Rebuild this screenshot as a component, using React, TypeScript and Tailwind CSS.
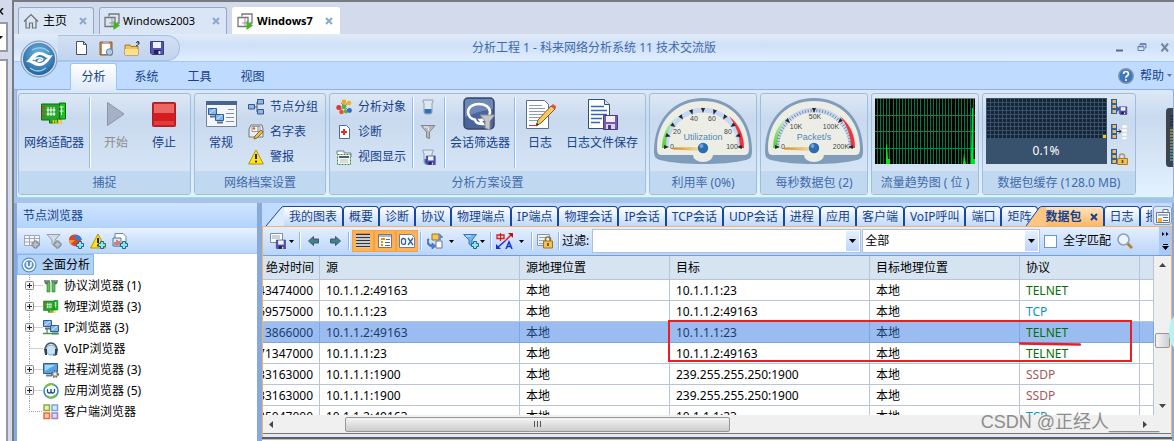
import React from 'react';

type Kids = { children?: React.ReactNode };

function Svg({ w = 16, h = 16, box, children, className = '' }: Kids & { w?: number; h?: number; box?: string; className?: string }) {
  return (
    <svg width={w} height={h} viewBox={box ?? `0 0 ${w} ${h}`} fill="none" aria-hidden="true" className={`shrink-0 ${className}`}>
      {children}
    </svg>
  );
}

/* ---------- shared glyphs ---------- */

const Floppy = ({ x = 0, y = 0, s = 1 }: { x?: number; y?: number; s?: number }) => (
  <g transform={`translate(${x} ${y}) scale(${s})`}>
    <path d="M.5 1.5h13v13H2L.5 13z" fill="#5252b4" stroke="#3b3b86" />
    <path d="M3 2h8v6H3z" fill="#eef3fc" />
    <path d="M4 10h7v4H4z" fill="#23234e" />
    <path d="M8.5 11h2v3h-2z" fill="#dfe5f5" />
  </g>
);

const Plus = ({ x, y }: { x: number; y: number }) => (
  <path
    transform={`translate(${x} ${y})`}
    d="M2.5.5h3v2h2v3h-2v2h-3v-2h-2v-3h2z"
    fill="#8fe3ea"
    stroke="#1b6a86"
  />
);

const CloseX = ({ color }: { color: string }) => (
  <Svg w={8} h={8}>
    <path d="M1 1l6 6M7 1L1 7" stroke={color} strokeWidth="2" />
  </Svg>
);

const Caret = ({ className = '' }: { className?: string }) => (
  <Svg w={5} h={3} className={className}>
    <path d="M0 0h5L2.5 3z" fill="#000" />
  </Svg>
);

const WarnShape = () => (
  <g>
    <path d="M8 1L15.4 15H.6z" fill="#ffe21a" stroke="#b89500" strokeLinejoin="round" />
    <path d="M8 5v5" stroke="#222" strokeWidth="2" />
    <circle cx="8" cy="12.5" r="1.1" fill="#222" />
  </g>
);

const CardShape = () => (
  <g>
    <path d="M1 2h20v15h-4v4H9v-3H1z" fill="#25a62a" stroke="#0d6b14" />
    <path d="M19 1h6v16h-6z" fill="#19c21f" stroke="#0d6b14" />
    <path d="M3 4v3M3 9v2M3 13v2" stroke="#e8301a" strokeWidth="2" />
    <path d="M7.5 5v9M10.500 5v9M13.500 5v9M6 8h9M6 12h9" stroke="#fff" />
    <path d="M19 5h4M19 9h4M21 4v9" stroke="#fff" />
    <path d="M13 18v4M15.500 18v4M18 18v4M20.500 18v4" stroke="#e6c81b" strokeWidth="1.500" />
  </g>
);

const Pc = ({ x, y }: { x: number; y: number }) => (
  <g transform={`translate(${x} ${y})`}>
    <path d="M.5.5h8v6h-8z" fill="#7fb6ec" stroke="#355b93" />
    <path d="M2 5l5-4" stroke="#d7ecff" />
    <path d="M2 8.500h6" stroke="#5c6f8a" strokeWidth="2" />
  </g>
);

const Cells = () => (
  <g>
    {[0, 5, 10].map((y) => (
      <g key={y}>
        <path d={`M0 ${y}h6v5H0z`} fill="#2f5fa8" />
        <path d={`M1.500 ${y + 1}h3.500v3h-3.500z`} fill="#f1bb55" />
      </g>
    ))}
  </g>
);

/* ---------- virtual machine tabs ---------- */

const VmIcon = () => (
  <Svg w={17} h={17}>
    <path d="M5 3.500V1h10v9h-2" stroke="#777" strokeWidth="1.300" />
    <path d="M1 4.500h10v9H1z" stroke="#777" strokeWidth="1.300" />
    <path d="M5 10h5M8 5v8" stroke="#999" />
    <path d="M9.500 7.500l6.500 5-6.500 4.500z" fill="#43b428" />
  </Svg>
);

function VmTab({ icon, label, active = false, width, text }: { icon: React.ReactNode; label: string; active?: boolean; width: string; text: string }) {
  return (
    <div
      className={`flex h-[27px] items-center rounded-t-[3px] border border-b-0 pr-[6px] pl-[4px] ${width} ${
        active ? 'border-white bg-white font-bold' : 'border-[#8fa9cf] bg-[#dae6f5]'
      }`}
    >
      {icon}
      <button className={`text-left leading-[16px] whitespace-nowrap text-black ${text}`}>{label}</button>
      <button aria-label={`关闭 ${label}`} className="ml-auto">
        <CloseX color="#86abcb" />
      </button>
    </div>
  );
}

/* ---------- ribbon ---------- */

function Group({ title, children, width, align = 'justify-center' }: Kids & { title: string; width: string; align?: string }) {
  return (
    <section className={`flex h-[102px] shrink-0 flex-col rounded-[3px] border border-[#9ebfdb] bg-linear-to-b from-[#dde8f5] via-[#c9d9ee] via-25% to-[#dbe9f8] ${width}`}>
      <div className={`flex h-[77px] ${align}`}>{children}</div>
      <h2 className="flex h-[23px] items-center justify-center bg-[#c1d8f1] text-[12px] leading-[16px] whitespace-nowrap text-[#3e6aaa]">{title}</h2>
    </section>
  );
}

function Big({ icon, label, width, disabled = false }: { icon: React.ReactNode; label: string; width: string; disabled?: boolean }) {
  return (
    <button disabled={disabled} className={`flex flex-col items-center pt-[3px] ${width}`}>
      <span className="flex h-[34px] items-center justify-center">{icon}</span>
      <span className={`mt-[4px] text-[12px] leading-[16px] whitespace-nowrap ${disabled ? 'text-[#8d8d8d]' : 'text-[#15428b]'}`}>{label}</span>
    </button>
  );
}

function Small({ icon, label }: { icon: React.ReactNode; label: string }) {
  return (
    <button className="flex h-[25px] items-center gap-[6px] text-[12px] leading-[16px] whitespace-nowrap text-[#15428b]">
      {icon}
      {label}
    </button>
  );
}

const Divider = () => <span className="mt-[3px] h-[71px] w-[2px] shrink-0 border-r border-l border-r-white border-l-[#8fbcf2]" />;

function polar(cx: number, cy: number, r: number, deg: number) {
  const a = (deg * Math.PI) / 180;
  return [cx + r * Math.cos(a), cy - r * Math.sin(a)];
}

function Gauge({ name, labels, minor }: { name: string; labels: [string, number, number][]; minor: boolean }) {
  const majors = minor ? [0, 45, 90, 135, 180] : Array.from({ length: 11 }, (_, i) => i * 18);
  const minors = minor ? Array.from({ length: 41 }, (_, i) => i * 4.5) : [];
  const id = minor ? 'packets' : 'usage';
  return (
    <svg width="100" height="68" viewBox="0 0 100 68" role="img" aria-label={name} className="mt-[3px]">
      <defs>
        <linearGradient id={`g-${id}`} x1="0" y1="0" x2="0" y2="1">
          <stop offset="0" stopColor="#c8eecb" />
          <stop offset="1" stopColor="#4fd02c" />
        </linearGradient>
        <linearGradient id={`n-${id}`} x1="0" x2="1">
          <stop offset="0" stopColor="#d68f18" />
          <stop offset="1" stopColor="#f6dfae" />
        </linearGradient>
      </defs>
      <path d="M1 54C1 21 22 1 50 1s49 20 49 53c0 6-2 8-6 9-13 3-27 4-43 4S20 66 7 63c-4-1-6-3-6-9z" fill="#7f9cba" />
      <path d="M4 50C5 22 24 4 50 4s45 18 46 46c0 7-1 8-6 8H60a10 7 0 0 1-20 0H10c-5 0-6-1-6-8z" fill="#eceee6" />
      <path d="M13 50a37 37 0 0 1 74 0" fill="none" stroke="#c4d8f4" strokeWidth="5" />
      <path d="M9 51A41 41 0 0 1 23 20A52 52 0 0 0 13 51z" fill={`url(#g-${id})`} />
      <path d="M91 51A41 41 0 0 0 76 19A52 52 0 0 1 87 51z" fill="#f2333b" />
      {minors.map((d) => {
        const [a, b] = polar(50, 50, 38, d);
        const [c, e] = polar(50, 50, 35, d);
        return <path key={d} d={`M${a} ${b}L${c} ${e}`} stroke="#6c7480" strokeWidth=".8" />;
      })}
      {majors.map((d) => {
        const [a, b] = polar(50, 50, 39, d + 3);
        const [c, e] = polar(50, 50, 39, d - 3);
        const [f, g] = polar(50, 50, 34, d);
        return <path key={d} d={`M${a} ${b}L${c} ${e}L${f} ${g}z`} fill="#26282b" />;
      })}
      {labels.map(([t, x, y]) => (
        <text key={t} x={x} y={y} textAnchor="middle" fontSize="7" fontFamily="Liberation Sans" fill="#444">
          {t}
        </text>
      ))}
      <text x="50" y="43" textAnchor="middle" fontSize="9" fontFamily="Liberation Sans" fill="#5484b4">
        {name}
      </text>
      <path d="M20 50.500L48 50v4l-28-1.500z" fill={`url(#n-${id})`} />
      <circle cx="50" cy="51" r="5.200" fill="#2d6cb0" />
      <circle cx="48.500" cy="49" r="2" fill="#6ba4de" />
    </svg>
  );
}

const TrendChart = () => (
  <svg width="100" height="66" viewBox="0 0 100 66" role="img" aria-label="流量趋势图" className="mt-[4px]">
    <path d="M0 0h100v66H0z" fill="#000" />
    {Array.from({ length: 32 }, (_, i) => (
      <rect key={i} x={Math.round(i * 3.1) + 2} y="1" width="1" height="65" fill="#007a45" />
    ))}
    {[17, 33, 50].map((y) => (
      <rect key={y} x="0" y={y} width="100" height="1" fill="#008a50" />
    ))}
    <path d="M0 0h100v1H0z" fill="#777" />
    <path d="M11 66V47l1-1 1 15h2v5zM88 66l1-11 2 11zM96 66V55l1-45h1v51h2v5z" fill="#00e61a" />
  </svg>
);

const BufferGrid = () => (
  <svg width="121" height="66" viewBox="0 0 121 66" role="img" aria-label="缓存使用 0.1%" className="mt-[4px]">
    <path d="M0 0h121v66H0z" fill="#38516c" />
    {Array.from({ length: 10 }, (_, r) =>
      Array.from({ length: 30 }, (_, c) => (
        <rect key={`${r}-${c}`} x={c * 4 + 1} y={r * 4 + 1} width="3" height="3" fill={r === 9 && c === 29 ? '#e5cf12' : '#162535'} />
      )),
    )}
    <text x="60" y="57" textAnchor="middle" fontSize="12" fontFamily="Noto Sans" fill="#fff">
      0.1%
    </text>
  </svg>
);

/* ---------- ribbon icons ---------- */

const Flask = ({ save = false }: { save?: boolean }) => (
  <Svg>
    <path d="M3 1h10v2l-1 1v9q0 2-2 2H6q-2 0-2-2V4L3 3z" fill="#dde7f0" stroke="#8ea0b3" />
    <path d="M4.500 10h7v3q0 1.500-2 1.500h-3q-2 0-2-1.500z" fill="#2e72b5" />
    {save && <Floppy x={6} y={6} s={0.68} />}
  </Svg>
);

const FunnelGrey = () => (
  <Svg>
    <path d="M1 1.500h14L9.500 8v6.500l-3-1V8z" fill="#b5b8bb" stroke="#84888d" />
    <path d="M4 3h4l1 4" stroke="#f2f3f4" />
  </Svg>
);

const ObjectsIcon = () => (
  <Svg>
    <path d="M5 4l4 4-5 3M11 4L9 8l4 4M9 8v5" stroke="#888" />
    <circle cx="8" cy="2.800" r="2.300" fill="#f4a01e" />
    <circle cx="13" cy="4" r="2.300" fill="#f0b419" />
    <circle cx="2.800" cy="8.500" r="2.500" fill="#dd3927" />
    <circle cx="8" cy="7.500" r="2.300" fill="#5ab331" />
    <circle cx="5.500" cy="13" r="2.300" fill="#e1562d" />
    <circle cx="10" cy="12.500" r="2" fill="#5ab331" />
    <circle cx="13.500" cy="11.500" r="2.400" fill="#2f6cc7" />
  </Svg>
);

const DiagIcon = () => (
  <Svg>
    <path d="M3.500 1.500h7l3 3v10h-10z" fill="#fff" stroke="#4e6d93" />
    <path d="M8 5v6M5 8h6" stroke="#e03020" strokeWidth="2" />
  </Svg>
);

const ViewIcon = () => (
  <Svg>
    <path d="M1 5V2h7v2h7v4" fill="#fff" stroke="#6d7f92" />
    <path d="M1.500 5.500h13v10h-13z" fill="#eef5ec" stroke="#3f8c46" strokeDasharray="2 1" />
    <path d="M3 8h10" stroke="#4b6078" strokeWidth="2" />
    <path d="M4 11h8M4 13h8" stroke="#b6c9b8" />
  </Svg>
);

const NodesIcon = () => (
  <Svg>
    <path d="M5 8h4M9 3v10" stroke="#4e6078" />
    {[
      [0, 5],
      [9, 0],
      [9, 10],
    ].map(([x, y]) => (
      <path key={`${x}${y}`} d={`M${x + 0.5} ${y + 0.5}h6v4.500h-6z`} fill="#8fb6e6" stroke="#35568b" />
    ))}
  </Svg>
);

const NamesIcon = () => (
  <Svg>
    <path d="M1 5l2-4h11l1 4v8H1z" fill="#e9ebee" stroke="#70757c" />
    <path d="M4 2.500h8v5H4z" fill="#fff" stroke="#999" />
    <circle cx="6" cy="4.500" r="1.300" fill="#bd6a2a" />
    <path d="M9 4h2M9 6h2" stroke="#777" />
    <path d="M6 15l1-3 6-6 2 2-6 6z" fill="#f2bf4d" stroke="#8c6420" />
  </Svg>
);

const GeneralIcon = () => (
  <Svg w={32} h={28}>
    <path d="M1.500 1.500h30v25h-30z" fill="#f3f6fa" stroke="#74849a" />
    <path d="M1 1h31v4H1z" fill="#48658f" />
    <Pc x={3} y={8} />
    <Pc x={10} y={14} />
    <path d="M23 9.500h6M21 13.500h8M21 17.500h8M21 21.500h8" stroke="#8290a2" />
  </Svg>
);

const TalkIcon = () => (
  <Svg w={34} h={34}>
    <rect x="1" y="1" width="30" height="31" rx="4" fill="#4a649c" stroke="#36476c" strokeWidth="1.500" />
    <path d="M2 4q0-2 2-2h24q2 0 2 2v8Q16 14 2 20z" fill="#6c87ba" />
    <path d="M13 23c-5-1-8-4-8-8 0-5 5-8 11-8s11 3 11 8-5 8-10 8l3 4c-4 0-7-1-8-4z" stroke="#fff" strokeWidth="2.500" />
    <path d="M17 18h15l-5 6v9l-5-2v-7z" fill="#c4c6c8" stroke="#888d92" />
  </Svg>
);

const LogIcon = () => (
  <Svg w={32} h={32}>
    <path d="M2.500 2.500h18l4 4v24h-22z" fill="#fff" stroke="#5d6e85" />
    <path d="M5 7.500h13M5 10.500h16M5 13.500h16M5 16.500h14M5 19.500h12M5 22.500h10" stroke="#8e9cae" />
    <path d="M5 27.500h8" stroke="#d4372c" />
    <path d="M12 28l2-6L27 8l4 3-14 14z" fill="#f7c95e" stroke="#805c20" />
    <path d="M27 8l2-2 4 3-2 2z" fill="#d8574a" />
    <path d="M12 28l1-3 2 1.500z" fill="#333" />
  </Svg>
);

const LogSaveIcon = () => (
  <Svg w={32} h={32}>
    <path d="M2.500 1.500h16l5 5v24h-21z" fill="#fff" stroke="#33517d" />
    <path d="M18.500 1.500v5h5" fill="#d6e2f2" stroke="#33517d" />
    <path d="M5 8.500h13M5 12.500h16M5 16.500h16M5 20.500h11M5 24.500h9" stroke="#3468b3" strokeWidth="1.600" />
    <path d="M17.500 17.500h14v14h-14z" fill="#775bb2" stroke="#4d3a83" />
    <path d="M20 18h9v6h-9z" fill="#f1eef8" />
    <path d="M20 26h9v5h-9z" fill="#d9d3ea" />
    <path d="M22 27h3v4h-3z" fill="#4d3a83" />
  </Svg>
);

/* ---------- node tree ---------- */

const treeItems: { label: string; expandable: boolean; icon: React.ReactNode }[] = [
  {
    label: '协议浏览器 (1)',
    expandable: true,
    icon: (
      <Svg>
        <path d="M1 2h6v2H1zM8 2h7v2H8z" fill="#8c9299" />
        <path d="M4 4h3v10H4zM9 4h3v10H9z" fill="#5cc255" stroke="#23752a" strokeWidth=".6" />
        <path d="M2 4l2 2M14 4l-2 2" stroke="#5d636b" strokeWidth="2" />
      </Svg>
    ),
  },
  { label: '物理浏览器 (3)', expandable: true, icon: <Svg box="0 0 27 24"><CardShape /></Svg> },
  {
    label: 'IP浏览器 (3)',
    expandable: true,
    icon: (
      <Svg>
        <Pc x={0} y={0} />
        <Pc x={7} y={5} />
        <path d="M0 13.500h16" stroke="#37a23c" strokeWidth="1.500" />
        <path d="M4 9v4" stroke="#555" />
      </Svg>
    ),
  },
  {
    label: 'VoIP浏览器',
    expandable: false,
    icon: (
      <Svg>
        <circle cx="8" cy="9" r="5" fill="#c5e3f8" stroke="#71a9d5" />
        <path d="M2 9a6 7 0 0 1 12 0" stroke="#4b535d" strokeWidth="1.600" />
        <path d="M1 8h3v6H2zM12 8h3l-1 6h-2z" fill="#394049" />
        <path d="M10 14h3" stroke="#333" />
      </Svg>
    ),
  },
  {
    label: '进程浏览器 (3)',
    expandable: true,
    icon: (
      <Svg>
        <path d="M.5 1.500h14v10H.5z" fill="#54a5e6" stroke="#355b86" />
        <path d="M2 3h10L2 9z" fill="#a8d4f5" />
        <path d="M3 13.500h6" stroke="#6f7f92" strokeWidth="2" />
        <circle cx="12" cy="12" r="3" fill="#b9bdc2" stroke="#656b73" strokeDasharray="1.500 1" strokeWidth="2" />
        <circle cx="12" cy="12" r="1" fill="#fff" />
      </Svg>
    ),
  },
  {
    label: '应用浏览器 (5)',
    expandable: true,
    icon: (
      <Svg>
        <circle cx="8" cy="8" r="7" fill="#fff" stroke="#2b87c9" strokeWidth="1.500" />
        <path d="M2 5a7 7 0 0 1 9-3M13 12a7 7 0 0 1-9 1" stroke="#7cc13a" strokeWidth="2" />
        <path d="M4.500 6v2q0 2 1.700 2T8 8V6v2q0 2 1.700 2t1.800-2V6" stroke="#1c4f80" strokeWidth="1.300" />
      </Svg>
    ),
  },
  {
    label: '客户端浏览器',
    expandable: false,
    icon: (
      <Svg>
        <path d="M1 1h5.500v5.500H1z" fill="#e4f0b8" stroke="#93ab3c" strokeWidth="1.500" />
        <path d="M9 1h5.500v5.500H9z" fill="#cfeaff" stroke="#79a5d8" strokeWidth="1.500" />
        <path d="M1 9h5.500v5.500H1z" fill="#ffc7a8" stroke="#e26d42" strokeWidth="1.500" />
        <path d="M9 9h5.500v5.500H9z" fill="#e4d6f2" stroke="#9b86c4" strokeWidth="1.500" />
      </Svg>
    ),
  },
];

function NodeTree() {
  return (
    <ul className="flex-1 overflow-hidden bg-white">
      <li>
        <button className="flex h-[21px] items-center gap-[5px] border border-[#86b8ee] bg-[#b0d2f7] pr-[3px] pl-[3px] text-[12px] leading-[16px] text-black">
          <Svg>
            <circle cx="8" cy="8" r="7.500" fill="#5b93c8" />
            <circle cx="8" cy="8" r="5.500" stroke="#fff" strokeWidth="1.500" />
            <path d="M6 5v3q0 2 2 2t2-2V5" stroke="#fff" strokeWidth="1.500" />
          </Svg>
          全面分析
        </button>
      </li>
      {treeItems.map((item, i) => (
        <li key={item.label} className="flex h-[21px] items-center text-[12px] leading-[16px] text-black">
          <Svg w={26} h={21}>
            <path d={i === treeItems.length - 1 ? 'M12.500 0v10.500H26' : 'M12.500 0v21M12.500 10.500H26'} stroke="#a0a0a0" strokeDasharray="1 1" />
            {item.expandable && (
              <g>
                <rect x="8.500" y="6.500" width="8" height="8" rx="1" fill="#f4f4f4" stroke="#8c8c8c" />
                <path d="M10 10.500h5M12.500 8v5" stroke="#222" />
              </g>
            )}
          </Svg>
          {item.icon}
          <button className="ml-[5px] whitespace-nowrap">{item.label}</button>
        </li>
      ))}
    </ul>
  );
}

/* ---------- packet view ---------- */

const tabsBefore = ['概要', '诊断', '协议', '物理端点', 'IP端点', '物理会话', 'IP会话', 'TCP会话', 'UDP会话', '进程', '应用', '客户端', 'VoIP呼叫', '端口', '矩阵'];

const plainTab =
  'h-[20px] shrink-0 rounded-t-[4px] border border-b-0 border-[#1747a0] bg-linear-to-b from-white to-[#c0d9fb] px-[5px] text-[12px] leading-[18px] whitespace-nowrap text-[#15428b]';

function ViewTabs() {
  return (
    <div className="flex h-[24px] items-end overflow-hidden border-b border-[#f7b25f] bg-[#bfdbff]">
      <div className="flex min-w-0 flex-1 items-end overflow-hidden">
        <Svg w={26} h={20} className="ml-[4px]">
          <path d="M0 20L15 2q1-1.500 3-1.500h8V20z" fill="#dceafd" />
          <path d="M0 20L15 2q1-1.500 3-1.500h8" stroke="#1747a0" />
        </Svg>
        <button className={`${plainTab} -ml-[8px] rounded-tl-none border-l-0`}>我的图表</button>
        {tabsBefore.map((t) => (
          <button key={t} className={plainTab}>
            {t}
          </button>
        ))}
        <Svg w={20} h={20} className="relative -ml-[12px]">
          <path d="M0 20L13 2q1-1.500 3-1.500h4V20z" fill="#fdc685" />
          <path d="M0 20L13 2q1-1.500 3-1.500h4" stroke="#1747a0" />
        </Svg>
        <div className="flex h-[20px] shrink-0 items-center gap-[8px] rounded-tr-[4px] border-t border-r border-[#1747a0] bg-linear-to-b from-[#ffe3bd] to-[#fdb765] pr-[5px]">
          <button className="text-[12px] leading-[18px] font-bold whitespace-nowrap text-[#15428b]">数据包</button>
          <button aria-label="关闭数据包">
            <CloseX color="#15428b" />
          </button>
        </div>
        <button className={plainTab}>日志</button>
        <button className={plainTab}>报表</button>
      </div>
      <button aria-label="选择视图" className="mb-px ml-[1px] flex h-[19px] w-[19px] shrink-0 items-center justify-center rounded-[3px] border border-[#8a9db8] bg-[#dfeafa]">
        <Svg>
          <path d="M1.500 4.500h13v10h-13zM8 4.500v-3h5v3" fill="#f6f8fb" stroke="#6a7688" />
          <path d="M3 10h4v4H3z" fill="#f2b035" />
          <path d="M8 9.500h5M8 12.500h5M3 7h10" stroke="#4c6fa1" />
        </Svg>
      </button>
    </div>
  );
}

const BarSep = () => <span className="h-[18px] w-[2px] shrink-0 border-r border-l border-r-white border-l-[#8fb9ee]" />;

function PacketToolbar() {
  return (
    <div className="flex h-[29px] items-center border-b border-[#6f9fdf] bg-linear-to-b from-[#e4effe] to-[#b9d5fb]">
      <button aria-label="保存" className="ml-[7px] flex items-center gap-[3px]">
        <Svg>
          <path d="M.5.5h12v9H.5z" fill="#fff" stroke="#7f8da2" />
          <path d="M2 3h8M2 5h8" stroke="#98a5b8" />
          <Floppy x={6} y={6} s={0.7} />
        </Svg>
        <Caret />
      </button>
      <span className="ml-[5px] flex"><BarSep /></span>
      <button aria-label="上一个" className="ml-[7px]">
        <Svg w={12} h={10}>
          <path d="M.5 5L5.500.5V3h5v4h-5v2.500z" fill="#3c8391" stroke="#49566d" />
        </Svg>
      </button>
      <button aria-label="下一个" className="ml-[9px]">
        <Svg w={12} h={10}>
          <path d="M11.500 5L6.500.5V3h-5v4h5v2.500z" fill="#3c8391" stroke="#49566d" />
        </Svg>
      </button>
      <span className="ml-[7px] flex"><BarSep /></span>
      <div className="ml-[2px] flex h-[22px] bg-[#ffb255]">
        <button aria-label="列表" className="flex w-[22px] items-center justify-center border border-[#f3a246]">
          <Svg>
            <path d="M1 1h14v14H1z" fill="#fff" />
            <path d="M1 1.500h14M1 4.500h14M1 7.500h14M1 10.500h14M1 13.500h14" stroke="#333" strokeWidth="1.500" />
          </Svg>
        </button>
        <button aria-label="详细" className="flex w-[22px] items-center justify-center border border-[#f3a246]">
          <Svg>
            <path d="M1.500 1.500h13v13h-13z" fill="#fff" stroke="#6e7a83" />
            <path d="M2 3h12" stroke="#b2b9bd" strokeWidth="2" />
            <path d="M4 6h4M4 9h2M4 12h2" stroke="#d49600" strokeWidth="2" />
            <path d="M9 6.500h4M8 9.500h5M8 12.500h5" stroke="#667" />
          </Svg>
        </button>
        <button aria-label="十六进制" className="flex w-[22px] items-center justify-center border border-[#f3a246]">
          <Svg>
            <path d="M.5 1.500h12l3 3v10H.5z" fill="#fff" stroke="#6881a8" />
            <rect x="2.500" y="5.500" width="4" height="6" rx="2" stroke="#2a63ad" strokeWidth="1.300" />
            <path d="M9 5l5 7M14 5l-5 7" stroke="#2a63ad" strokeWidth="1.300" />
          </Svg>
        </button>
      </div>
      <span className="ml-[2px] flex"><BarSep /></span>
      <button aria-label="刷新" className="ml-[5px] flex items-center gap-[6px]">
        <Svg>
          <path d="M5 1h7v6H5z" fill="#f4c653" stroke="#9d7326" />
          <path d="M2 6q-2 5 3 6v-2l4 3-4 3v-2Q-1 13 .5 6z" fill="#4b83cc" stroke="#365f99" strokeWidth=".6" />
          <path d="M9 8h6v7H9z" fill="#fff" stroke="#5e759b" />
          <path d="M12 1l3 3h-2v3" stroke="#4b83cc" strokeWidth="1.500" />
        </Svg>
        <Caret />
      </button>
      <button aria-label="过滤器" className="ml-[9px] flex items-center gap-[1px]">
        <Svg>
          <path d="M.5 1.500h13L9 7v6l-3-2V7z" fill="#73b4ec" stroke="#3175bd" />
          <path d="M3 3h5" stroke="#dbeefe" />
          <Plus x={8} y={8} />
        </Svg>
        <Caret />
      </button>
      <span className="ml-[5px] flex"><BarSep /></span>
      <button aria-label="解码语言" className="ml-[4px] flex items-center gap-[6px]">
        <Svg w={17} h={16}>
          <path d="M4.500 0v8M1 2h7v3.500H1z" stroke="#e01818" strokeWidth="1.300" />
          <path d="M1 15L9 8" stroke="#1234d8" strokeWidth="1.500" />
          <path d="M9 8l7-7" stroke="#e01818" strokeWidth="1.500" />
          <path d="M12 0h5v5z" fill="#c01010" />
          <path d="M0 11v5h5z" fill="#1234d8" />
          <path d="M10 16l3-7 3 7M11 13.500h4" stroke="#1234d8" strokeWidth="1.500" />
        </Svg>
        <Caret />
      </button>
      <span className="ml-[7px] flex"><BarSep /></span>
      <button aria-label="锁定" className="ml-[4px]">
        <Svg>
          <path d="M.5 1.500h12v11H.5z" fill="#edf1f6" stroke="#8794a6" />
          <path d="M2 4.500h8M2 7.500h8M2 10.500h8" stroke="#9aa6b6" />
          <path d="M8.500 8V6q0-2 2.500-2t2.500 2v2" stroke="#8c7635" strokeWidth="1.500" />
          <path d="M6.500 8h9v7h-9z" fill="#f3c250" stroke="#a07720" />
          <path d="M11 10v3" stroke="#5c4412" strokeWidth="1.500" />
        </Svg>
      </button>
      <span className="mr-[2px] ml-[5px] flex"><BarSep /></span>
      <label htmlFor="filter" className="text-[12px] leading-[16px] whitespace-nowrap text-black">过滤:</label>
      <div className="ml-[3px] flex h-[24px] min-w-0 flex-[267_1_0px] border border-[#abc1de] bg-white p-px">
        <input id="filter" className="min-w-0 flex-1 bg-white px-[2px] text-[12px] outline-none" />
        <button aria-label="过滤历史" className="flex w-[13px] items-center justify-center bg-linear-to-b from-[#e6f0fe] to-[#bcd5f8]">
          <Svg w={7} h={4}><path d="M0 0h7L3.500 4z" fill="#000" /></Svg>
        </button>
      </div>
      <div className="relative ml-px h-[24px] min-w-0 flex-[179_1_0px]">
        <select aria-label="范围" className="h-full w-full appearance-none border border-[#abc1de] bg-white pl-[2px] text-[12px] text-black outline-none">
          <option>全部</option>
        </select>
        <span className="pointer-events-none absolute top-[2px] right-[2px] flex h-[20px] w-[13px] items-center justify-center bg-linear-to-b from-[#e6f0fe] to-[#bcd5f8]">
          <Svg w={7} h={4}><path d="M0 0h7L3.500 4z" fill="#000" /></Svg>
        </span>
      </div>
      <label className="ml-[4px] flex items-center gap-[6px] text-[12px] leading-[16px] whitespace-nowrap text-black">
        <input type="checkbox" className="h-[13px] w-[13px] appearance-none border border-[#6a96cf] bg-white" />
        全字匹配
      </label>
      <button aria-label="搜索" className="mr-[26px] ml-[6px]">
        <Svg>
          <path d="M10 10l5 5" stroke="#b48434" strokeWidth="3" />
          <circle cx="6.500" cy="6.500" r="5.500" fill="#eaf4fd" stroke="#92a1b1" strokeWidth="1.500" />
        </Svg>
      </button>
      <button aria-label="更多" className="flex h-full w-[12px] flex-col items-center justify-between bg-[#a9caf7] py-[5px]">
        <Svg w={7} h={5}><path d="M0 0l2.500 2L0 4zM4 0l2.500 2L4 4z" fill="#000" /></Svg>
        <Svg w={7} h={6}><path d="M1 0h5v1H1zM0 2h7L3.500 6z" fill="#000" /></Svg>
      </button>
    </div>
  );
}

const green = 'text-[#007000]';
const blue = 'text-[#0a92bd]';
const brown = 'text-[#a05a5a]';
const hostA = '10.1.1.2:49163';
const hostB = '10.1.1.1:23';
const multicast = '239.255.255.250:1900';

const packets: [string, string, string, string, string, boolean][] = [
  ['43474000', hostA, hostB, 'TELNET', green, false],
  ['69575000', hostB, hostA, 'TCP', blue, false],
  ['13866000', hostA, hostB, 'TELNET', green, true],
  ['71347000', hostB, hostA, 'TELNET', green, false],
  ['33163000', '10.1.1.1:1900', multicast, 'SSDP', brown, false],
  ['33163000', '10.1.1.1:1900', multicast, 'SSDP', brown, false],
  ['25047000', hostA, hostB, 'TCP', blue, false],
];

function PacketTable() {
  const th = 'h-[24px] border-r border-b border-[#b7c3d6] bg-[#d6e4f2] p-0 pl-[6px] text-left font-normal whitespace-nowrap text-black';
  const td = 'h-[21px] overflow-hidden border-r border-b p-0 pt-[2px] pl-[6px] whitespace-nowrap';
  return (
    <div className="flex min-h-0 flex-1">
      <div className="relative min-w-0 flex-1 overflow-hidden bg-white">
        <table className="w-full table-fixed border-separate border-spacing-0 text-[12px] leading-[16px]">
          <colgroup>
            <col className="w-[57px]" />
            <col className="w-[200px]" />
            <col className="w-[150px]" />
            <col className="w-[200px]" />
            <col className="w-[150px]" />
            <col className="w-[120px]" />
            <col />
          </colgroup>
          <thead>
            <tr>
              <th className="h-[24px] border-r border-b border-[#b7c3d6] bg-[#d6e4f2] p-0 pl-[3px] text-left font-normal whitespace-nowrap text-black">绝对时间</th>
              <th className={th}>源</th>
              <th className={th}>源地理位置</th>
              <th className={th}>目标</th>
              <th className={th}>目标地理位置</th>
              <th className={th}>协议</th>
              <th className={th} />
            </tr>
          </thead>
          <tbody>
            {packets.map(([time, src, dst, proto, color, selected], i) => {
              const tone = selected ? 'border-[#77a7e4] bg-[#9bbcf0] text-[#183c6c]' : 'border-[#b9c4d6] text-black';
              const cell = `${td} ${tone}`;
              return (
                <tr key={i}>
                  <td className={`h-[21px] border-r border-b p-0 pt-[2px] ${tone}`}>
                    <div className="flex justify-end overflow-hidden pr-[6px]">{time}</div>
                  </td>
                  <td className={cell}>{src}</td>
                  <td className={cell}>本地</td>
                  <td className={cell}>{dst}</td>
                  <td className={cell}>本地</td>
                  <td className={cell}><span className={color}>{proto}</span></td>
                  <td className={cell} />
                </tr>
              );
            })}
          </tbody>
        </table>
        <div className="pointer-events-none absolute top-[64px] left-[405px] h-[42px] w-[464px] border-2 border-[#f01c24]" />
        <Svg w={62} h={4} className="pointer-events-none absolute top-[86px] left-[756px]">
          <path d="M1 1.500L61 2.500" stroke="#f01c24" strokeWidth="2.500" strokeLinecap="round" />
        </Svg>
      </div>
      <div className="flex w-[17px] flex-col items-center bg-[#f0f0f0]">
        <Svg w={7} h={4} className="mt-[7px]"><path d="M0 4h7L3.500 0z" fill="#444" /></Svg>
        <div className="mt-[66px] h-[15px] w-[15px] rounded-[2px] border border-[#979797] bg-linear-to-r from-[#f5f5f5] to-[#cfcfcf]" />
        <Svg w={7} h={4} className="mt-auto mb-[7px]"><path d="M0 0h7L3.500 4z" fill="#444" /></Svg>
      </div>
    </div>
  );
}

function PacketView() {
  return (
    <section className="flex min-w-0 flex-1 flex-col">
      <ViewTabs />
      <div className="flex min-h-0 flex-1 flex-col border-r border-l border-r-[#efb773] border-l-[#f7b25f]">
        <PacketToolbar />
        <PacketTable />
        <div className="relative flex h-[18px] shrink-0 items-center bg-[#f0f0f0]">
          <Svg w={4} h={7} className="ml-[6px]"><path d="M4 0v7L0 3.500z" fill="#444" /></Svg>
          <div className="ml-[72px] flex h-[15px] w-[385px] items-center justify-center gap-[2px] rounded-[2px] border border-[#979797] bg-linear-to-b from-[#f5f5f5] to-[#cbcbcb]">
            <span className="h-[6px] w-px bg-[#555]" />
            <span className="h-[6px] w-px bg-[#555]" />
            <span className="h-[6px] w-px bg-[#555]" />
          </div>
          <Svg w={4} h={7} className="mr-[24px] ml-auto"><path d="M0 0v7l4-3.500z" fill="#444" /></Svg>
          <span className="pointer-events-none absolute right-[12px] bottom-[-2px] font-['Liberation_Sans','Noto_Sans_CJK_SC',sans-serif] text-[18px] leading-[26px] whitespace-nowrap text-[#8d8d8d]">
            CSDN @正经人_____
          </span>
        </div>
        <div className="h-[4px] shrink-0 border-t border-[#777] bg-[#e8e8e8]" />
      </div>
      <div className="h-[4px] shrink-0 border-t-2 border-b border-t-[#3865a8] border-b-white bg-[#f7b25f]" />
    </section>
  );
}

/* ---------- page ---------- */

export default function App() {
  return (
    <div className="flex h-screen min-h-[440px] w-full overflow-hidden bg-[#d3daeb] font-['Noto_Sans','Noto_Sans_CJK_SC',sans-serif] text-[12px] leading-[16px]">
      <aside className="flex w-[12px] shrink-0 flex-col">
        <button aria-label="关闭侧栏" className="flex h-[22px] w-[8px] items-center overflow-hidden">
          <Svg w={4} h={7}><path d="M-3 0l6 6.500M3 0l-6 7" stroke="#111" strokeWidth="1.500" /></Svg>
        </button>
        <div className="flex h-[30px] w-[8px] items-center border-2 border-l-0 border-[#979aa2] bg-white">
          <Svg w={3} h={3}><path d="M-2 0h5L.5 3z" fill="#111" /></Svg>
        </div>
        <div className="mt-[7px] w-[8px] flex-1 border-t-2 border-r-2 border-[#9799a0] bg-white" />
      </aside>
      <main className="flex min-w-0 flex-1 flex-col border-t-2 border-l-2 border-[#777a82]">
        <div className="flex h-[32px] shrink-0 items-end gap-[5px] pl-[4px]">
          <VmTab
            width="w-[76px]"
            text="ml-[4px] text-[12px]"
            label="主页"
            icon={
              <Svg>
                <path d="M1 8.500L8 1.500l7 7M3 7v8h3.500v-5h3v5H13V7" stroke="#6d7074" strokeWidth="1.200" />
              </Svg>
            }
          />
          <VmTab width="w-[128px]" text="ml-[2px] text-[11px]" label="Windows2003" icon={<VmIcon />} />
          <VmTab width="w-[108px]" text="ml-[3px] text-[11px]" label="Windows7" icon={<VmIcon />} active />
        </div>

        <header className="relative shrink-0">
          <div className="grid h-[28px] grid-cols-[1fr_auto_1fr] items-center border-b border-[#a5c8f4] bg-linear-to-b from-[#e2ecf9] via-[#cfe0f7] via-40% to-[#e0eeff]">
            <div className="ml-[44px] flex h-[26px] w-[122px] items-center gap-[10px] rounded-r-full border border-l-0 border-[#a4c1e6] bg-linear-to-b from-[#d3e0f3] to-[#c1d4ee] pl-[16px]">
              <button aria-label="新建">
                <Svg w={14}>
                  <path d="M2.500 1.500h7l3 3v10h-10z" fill="#fff" stroke="#41546e" />
                  <path d="M9.500 1.500v3h3" stroke="#41546e" />
                </Svg>
              </button>
              <button aria-label="配置">
                <Svg>
                  <path d="M2 2h12v13H2z" fill="#c88c55" stroke="#8c5d30" />
                  <path d="M4 4h8v10H4z" fill="#fff" />
                  <path d="M5 1h6v3H5z" fill="#aab0b8" />
                  <circle cx="11.500" cy="12" r="3.200" fill="#a8cde8" stroke="#5d86a8" />
                </Svg>
              </button>
              <button aria-label="打开">
                <Svg>
                  <path d="M1 5h5l1 1.500h7V15H1z" fill="#f2c552" stroke="#a7782a" />
                  <path d="M1 9h13v6H1z" fill="#ffe08a" />
                  <path d="M12 6q4-1 2-4M12 3l2-2 1.500 2.500" stroke="#333" />
                </Svg>
              </button>
              <button aria-label="保存工程">
                <Svg><Floppy x={0} y={0} /></Svg>
              </button>
            </div>
            <h1 className="text-[12px] leading-[16px] font-normal whitespace-nowrap text-[#3e6aaa]">分析工程 1 - 科来网络分析系统 11 技术交流版</h1>
            <div className="flex items-center justify-end gap-[13px] pr-[4px]">
              <button aria-label="最小化"><Svg w={9} h={9}><path d="M1 7.500h7" stroke="#5f6b7e" strokeWidth="2" /></Svg></button>
              <button aria-label="还原">
                <Svg w={10} h={9}>
                  <path d="M3 2V1h6v4H8M1 3.500h6v4H1z" stroke="#637ca5" />
                  <path d="M1 3.500h6M3 1h6" stroke="#637ca5" strokeWidth="1.500" />
                </Svg>
              </button>
              <button aria-label="关闭"><Svg w={10} h={9}><path d="M1.500.5l6.500 8M8 .5l-6.500 8" stroke="#7185a5" strokeWidth="2" /></Svg></button>
            </div>
          </div>
          <nav className="flex h-[28px] items-end gap-[6px] border-b border-[#8db2e3] bg-[#bfdbff] pl-[56px] text-[12px] leading-[16px] text-[#15428b]">
            <button className="-mb-px h-[27px] w-[47px] rounded-t-[3px] border border-b-0 border-[#9cc5f3] bg-linear-to-b from-white to-[#dfeafa]">分析</button>
            <button className="h-[25px] w-[47px]">系统</button>
            <button className="h-[25px] w-[47px]">工具</button>
            <button className="h-[25px] w-[47px]">视图</button>
            <button className="ml-auto flex h-[27px] items-center gap-[6px] pr-[2px]">
              <Svg>
                <circle cx="8" cy="8" r="7.300" fill="#3b78bd" stroke="#8b97a8" strokeWidth="1.400" />
                <path d="M5.500 6q0-2.500 2.500-2.500T10.500 6q0 1-1.500 2t-1 2" stroke="#fff" strokeWidth="1.700" />
                <circle cx="8" cy="12" r="1" fill="#fff" />
              </Svg>
              <span className="flex items-center gap-[3px]">
                帮助
                <Svg w={5} h={3}><path d="M0 0h5L2.500 3z" fill="#4a79bd" /></Svg>
              </span>
            </button>
          </nav>
          <button aria-label="主菜单" className="absolute top-[6px] left-[6px]">
            <Svg w={38} h={39}>
              <defs>
                <radialGradient id="orb" cx=".5" cy=".35" r=".65">
                  <stop offset="0" stopColor="#73b8e2" />
                  <stop offset="1" stopColor="#22649f" />
                </radialGradient>
              </defs>
              <circle cx="19" cy="19" r="18" fill="#cbd9e8" stroke="#7b93af" />
              <circle cx="19" cy="19" r="16" fill="url(#orb)" />
              <path d="M5 22c5-1 6-10 14-10 7 0 9 5 14 3-3 3-6 11-14 11-7 0-8-5-14-4z" fill="#fff" />
              <path d="M11 21c4-1 5-6 9-6 4 0 5 3 8 3-3 1-4 5-8 5-4 0-5-3-9-2z" fill="#3880b7" />
              <path d="M14 20q4-4 9-1-1 3-5 2 1-2 3-1" stroke="#fff" strokeWidth="1.300" />
              <path d="M12 10q10-5 17 2M10 28q8 6 16 0" stroke="#9fd0ec" strokeWidth="1.300" />
            </Svg>
          </button>
        </header>

        <div className="shrink-0 bg-[#a8c3e9] pb-[5px] pl-[2px]">
          <div className="flex h-[108px] items-start gap-[3px] rounded-[3px] border border-t-0 border-[#8db2e3] border-b-[#93dff0] bg-linear-to-b from-[#dce8f6] via-[#c9daef] via-25% to-[#e4f2ff] pt-[3px] pl-px">
            <Group title="捕捉" width="w-[173px]" align="justify-start">
              <Big width="w-[70px]" label="网络适配器" icon={<Svg w={28} h={24} box="0 0 27 24"><CardShape /></Svg>} />
              <Divider />
              <Big
                width="w-[50px]"
                disabled
                label="开始"
                icon={<Svg w={20} h={26}><path d="M1.500 1.500L18 13 1.500 24.500z" fill="#a6b1c5" stroke="#8994ab" /></Svg>}
              />
              <Big
                width="w-[46px]"
                label="停止"
                icon={
                  <Svg w={24} h={25}>
                    <rect x=".5" y=".5" width="23" height="24" rx="1" fill="#d51c20" stroke="#9e2528" />
                    <path d="M2 2h20v9H2z" fill="#ec6664" />
                    <path d="M2 19h20v4H2z" fill="#e23b3b" />
                  </Svg>
                }
              />
            </Group>
            <Group title="网络档案设置" width="w-[132px]" align="justify-start pl-[3px]">
              <Big width="w-[46px]" label="常规" icon={<GeneralIcon />} />
              <div className="ml-[4px]">
                <Small icon={<NodesIcon />} label="节点分组" />
                <Small icon={<NamesIcon />} label="名字表" />
                <Small icon={<Svg><WarnShape /></Svg>} label="警报" />
              </div>
            </Group>
            <Group title="分析方案设置" width="w-[317px]" align="justify-start pl-[6px]">
              <div className="mr-[6px]">
                <Small icon={<ObjectsIcon />} label="分析对象" />
                <Small icon={<DiagIcon />} label="诊断" />
                <Small icon={<ViewIcon />} label="视图显示" />
              </div>
              <Divider />
              <div className="mr-[8px] ml-[6px] flex w-[16px] flex-col">
                <button aria-label="缓存" className="flex h-[25px] items-center"><Flask /></button>
                <button aria-label="过滤" className="flex h-[25px] items-center"><FunnelGrey /></button>
                <button aria-label="保存缓存" className="flex h-[25px] items-center"><Flask save /></button>
              </div>
              <Divider />
              <Big width="w-[68px]" label="会话筛选器" icon={<TalkIcon />} />
              <Divider />
              <Big width="w-[48px]" label="日志" icon={<LogIcon />} />
              <Big width="w-[76px]" label="日志文件保存" icon={<LogSaveIcon />} />
            </Group>
            <Group title="利用率 (0%)" width="w-[108px]">
              <Gauge name="Utilization" minor={false} labels={[['0', 19, 52], ['20', 24, 37], ['40', 41, 24], ['60', 59, 24], ['80', 75, 37], ['100', 79, 52]]} />
            </Group>
            <Group title="每秒数据包 (2)" width="w-[108px]">
              <Gauge name="Packet/s" minor labels={[['0', 19, 52], ['10K', 32, 32], ['50K', 51, 22], ['100K', 67, 32], ['200K', 77, 52]]} />
            </Group>
            <Group title="流量趋势图 ( 位 )" width="w-[108px]">
              <TrendChart />
            </Group>
            <Group title="数据包缓存 (128.0 MB)" width="w-[154px]" align="justify-start pl-[3px]">
              <BufferGrid />
              <div className="ml-[4px] flex w-[17px] flex-col">
                <button aria-label="保存数据包" className="flex h-[25px] items-center">
                  <Svg w={17}><Cells /><path d="M6 7l3 3-3 3z" fill="#345fa0" /><Floppy x={8} y={7} s={0.58} /></Svg>
                </button>
                <button aria-label="清空缓存" className="flex h-[25px] items-center">
                  <Svg w={17}><Cells /><path d="M6 7.500h4M8 5.500l2 2-2 2" stroke="#222" /><path d="M11 1h5v3h-5zM11 5h5v3h-5zM11 9h5v3h-5zM11 13h5v2.500h-5z" fill="#fff" stroke="#ccd3dc" strokeWidth=".5" /></Svg>
                </button>
                <button aria-label="锁定缓存" className="flex h-[25px] items-center">
                  <Svg w={17}><Cells /><path d="M8.500 9V7q0-2 2.500-2t2.500 2v2" stroke="#a99a6c" strokeWidth="1.500" /><path d="M6.500 9.500h10v6h-10z" fill="#efbf4f" stroke="#ae7e24" /><path d="M11.500 11v3" stroke="#5c4412" strokeWidth="1.500" /></Svg>
                </button>
              </div>
            </Group>
            <Svg w={7} h={59} className="mt-[15px] ml-auto">
              <path d="M7 0H3Q0 0 0 4v51q0 4 3 4h4z" fill="#3f434b" />
              <path d="M4 8h3M4 11h3M4 14h3M4 17h3" stroke="#1c2430" />
              <path d="M4 22h3M4 25h3M4 28h3" stroke="#dfc750" />
              <path d="M4 31h3M4 34h3M4 37h3M4 40h3" stroke="#a5c978" />
              <path d="M4 43h3M4 46h3M4 49h3M4 52h3" stroke="#5fd0b0" />
            </Svg>
          </div>
        </div>

        <div className="relative flex min-h-0 flex-1 bg-[#87a9dc] pr-[2px] pl-[3px]">
          <section className="mr-[5px] flex w-[240px] shrink-0 flex-col">
            <h2 className="flex h-[25px] items-center bg-linear-to-b from-[#cfe4ff] to-[#b3d3fb] pl-[6px] text-[12px] leading-[16px] text-[#15428b]">节点浏览器</h2>
            <div className="flex h-[26px] items-center gap-[6px] border-b border-[#a9c6ed] bg-linear-to-b from-[#e7f1ff] to-[#b9d5fb] pl-[7px]">
              <button aria-label="添加表">
                <Svg>
                  <path d="M.5 2.500h15v10H.5zM.5 5.500h15M.5 9h15M5.500 2.500v10M10.500 2.500v10" fill="#f4f6f9" stroke="#a0a8b5" />
                  <path d="M10 8h3v2h2v3h-2v2h-3v-2H8v-3h2z" fill="#b7c0ca" stroke="#7a828e" />
                </Svg>
              </button>
              <button aria-label="添加过滤器">
                <Svg>
                  <path d="M1 1.500h13L9 7v6l-3-2V7z" fill="#d3dae2" stroke="#949daa" />
                  <path d="M10 8h3v2h2v3h-2v2h-3v-2H8v-3h2z" fill="#b7c0ca" stroke="#7a828e" />
                </Svg>
              </button>
              <button aria-label="添加图表">
                <Svg>
                  <path d="M1 7a6 5 0 0 1 12-1v4q-3 4-7 3T1 8z" fill="#dc442e" />
                  <path d="M7 7V2q6 0 7 5z" fill="#2f7fd6" />
                  <path d="M1 7h6l-4 4q-2-1-2-4z" fill="#f39a2a" />
                  <Plus x={8} y={8} />
                </Svg>
              </button>
              <button aria-label="添加警报"><Svg><WarnShape /><Plus x={8} y={8} /></Svg></button>
              <button aria-label="添加报表">
                <Svg>
                  <path d="M3 .5h8l3 3V13H3z" fill="#fff" stroke="#6383a9" />
                  <path d="M1 5h8v8H1z" fill="#dbe7f5" stroke="#56749d" />
                  <path d="M3 12V9M5 12V7M7 12V8" stroke="#d2453a" strokeWidth="1.300" />
                  <Plus x={8} y={8} />
                </Svg>
              </button>
            </div>
            <NodeTree />
          </section>
          <PacketView />
          <Svg w={5} h={32} className="pointer-events-none absolute top-[113px] right-0">
            <path d="M5 0Q0 6 0 16t5 16z" fill="#b4f5f1" />
          </Svg>
        </div>
      </main>
    </div>
  );
}
